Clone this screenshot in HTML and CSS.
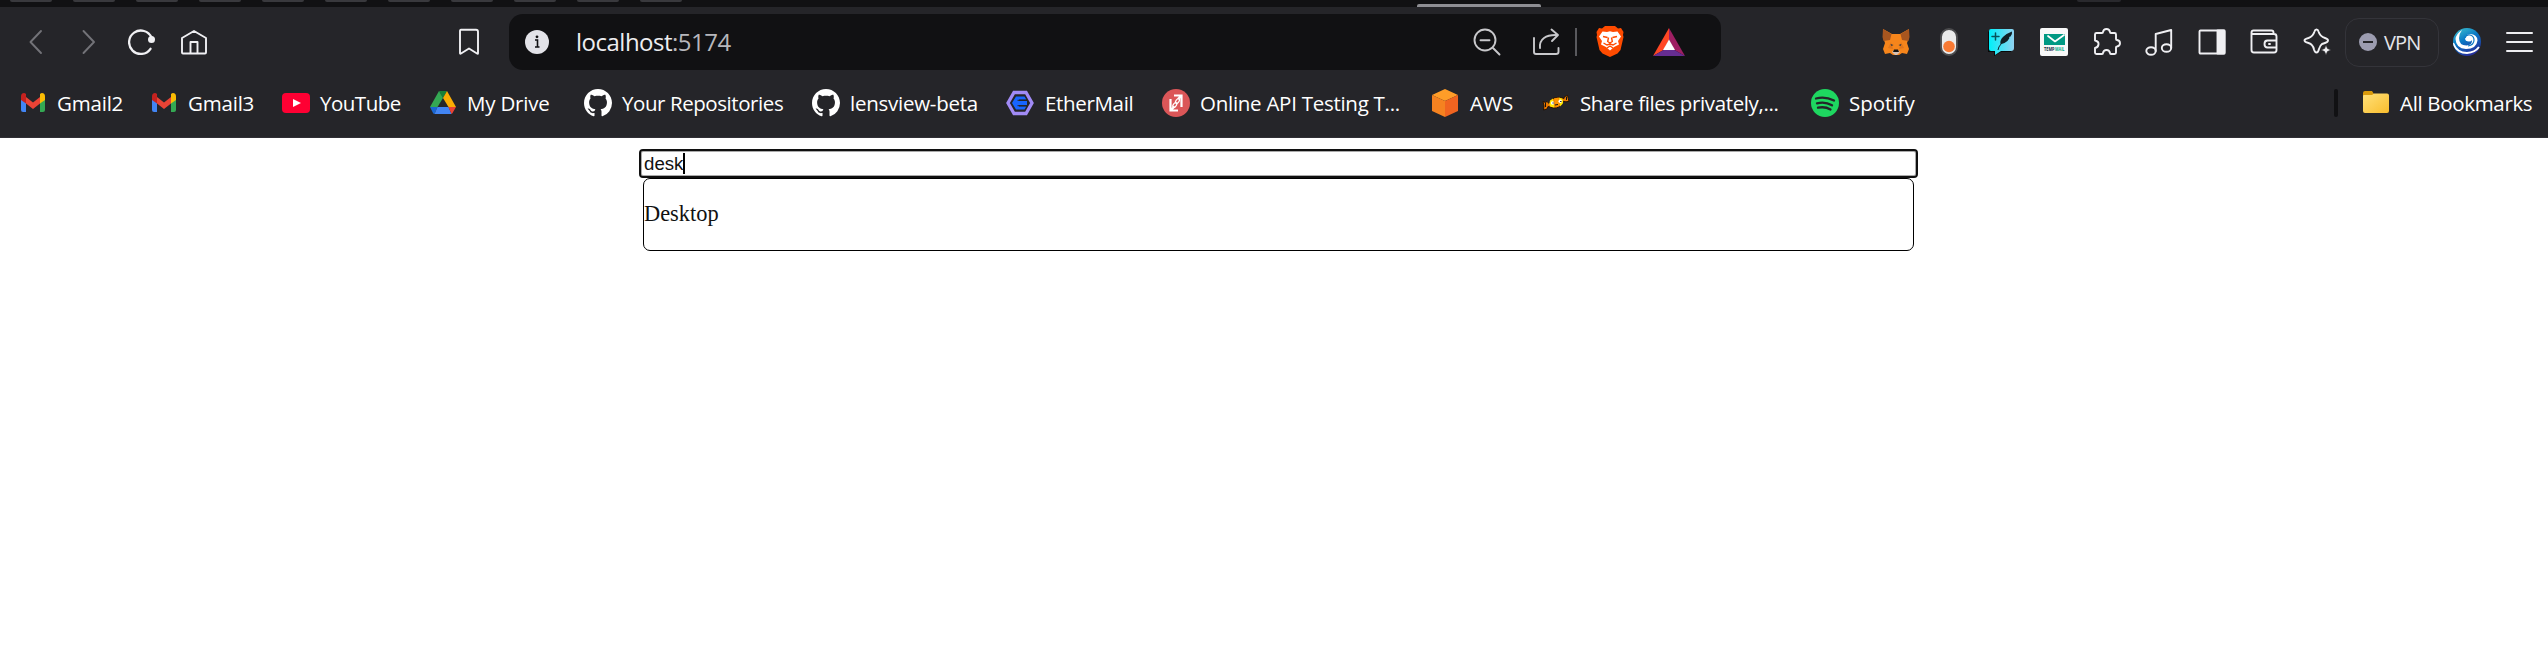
FILE: index.html
```
<!DOCTYPE html>
<html lang="en">
<head>
<meta charset="utf-8">
<title>localhost:5174</title>
<link rel="stylesheet" href="styles.css">
</head>
<body>
<svg class="defs" width="0" height="0">
  <symbol id="gmail" viewBox="0 0 28 28"><path d="M2 10h5v13H4q-2 0-2-2z" fill="#4285f4"/><path d="M21 10h5v11q0 2-2 2h-3z" fill="#34a853"/><path d="M7 8l7 5.500 7-5.500v6.500l-7 5.500-7-5.500z" fill="#ea4335"/><path d="M2 7.500Q2 4 5 4q1 0 2 1v9.500L2 11z" fill="#c5221f"/><path d="M26 7.500Q26 4 23 4q-1 0-2 1v9.500l5-3.500z" fill="#fbbc04"/></symbol>
  <symbol id="github" viewBox="0 0 16 16"><path fill="#fff" d="M8 0C3.58 0 0 3.58 0 8c0 3.54 2.290 6.530 5.470 7.590.4.070.55-.17.55-.38 0-.19-.01-.82-.01-1.490-2.010.37-2.530-.49-2.690-.94-.09-.23-.48-.94-.82-1.130-.28-.15-.68-.52-.01-.53.63-.01 1.080.58 1.230.82.72 1.210 1.870.87 2.330.66.070-.52.28-.87.51-1.070-1.780-.2-3.640-.89-3.640-3.950 0-.87.31-1.590.82-2.150-.08-.2-.36-1.020.08-2.120 0 0 .67-.21 2.200.82.64-.18 1.320-.27 2-.27s1.360.09 2 .27c1.530-1.040 2.200-.82 2.200-.82.44 1.100.16 1.920.08 2.120.51.56.82 1.270.82 2.150 0 3.070-1.870 3.750-3.650 3.950.29.25.54.73.54 1.480 0 1.070-.01 1.930-.01 2.200 0 .21.15.46.55.38A8 8 0 0 0 16 8c0-4.420-3.580-8-8-8z"/></symbol>
</svg>
<header class="browser">
  <div class="tabs">
    <div class="pinned"><i></i><i></i><i></i><i></i><i></i><i></i><i></i><i></i><i></i><i></i><i></i></div>
    <div class="active-tab"></div>
    <div class="new-tab"></div>
  </div>
  <div class="toolbar">
    <nav class="nav">
      <svg class="ic dim" viewBox="0 0 28 28"><path d="M19 3L8.500 14 19 25"/></svg>
      <svg class="ic dim" viewBox="0 0 28 28"><path d="M8.500 3L19 14 8.500 25"/></svg>
      <svg class="ic" viewBox="0 0 28 28"><path d="M23.500 9.500A11.700 11.700 0 1 0 22.500 20.800" stroke-width="2.300"/><circle cx="23.500" cy="11.500" r="3.500" fill="#f0f0f3" stroke="none"/></svg>
      <svg class="ic" viewBox="0 0 28 28"><path d="M2 10L14 3l12 7v14.500q0 1-1 1H3q-1 0-1-1zM10.500 25V14h7v11"/></svg>
    </nav>
    <svg class="ic mark" viewBox="0 0 28 28"><path d="M6 1.700h15q2 0 2 2v21.500q0 1-1 .3L14 20.500l-8 5q-1 .7-1-.5V3q0-1.300 1-1.300z"/></svg>
    <div class="address">
      <svg class="info" viewBox="0 0 24 24"><circle cx="12" cy="12" r="12" fill="#e3e3e8"/><path d="M10 10h2.500v7M10 17h4.500" stroke="#111113" stroke-width="1.600" fill="none"/><circle cx="12" cy="6.800" r="1.400" fill="#111113"/></svg>
      <div class="url">localhost<span>:5174</span></div>
      <svg class="ic soft zoom" viewBox="0 0 28 28"><circle cx="12" cy="12" r="10.500"/><path d="M7.500 12.300h9M20 20l6.500 6.500"/></svg>
      <svg class="ic soft share" viewBox="0 0 28 28"><path d="M2 10v14q0 2 2 2h20q2.500 0 2.500-2v-4M8 20C7 11 14 6.500 25 7M19.500 1.500L26 7l-6 6"/></svg>
      <div class="divider"></div>
      <svg class="brave" viewBox="0 0 28 32"><path d="M9 0h10l3 2.500 3-.5 2.500 4-.5 3 .5 2-3 13-3 3.500L14 31l-7.500-3.500L3.500 24l-3-13 .5-2-.5-3L3 2l3 .5z" fill="#ff4b00"/><path d="M6.500 5.500L11 6l3-.8L17 6l4.500-.5 3.500 5-3 4.500 1 3.500-5 2.500-4 3.500-4-3.500-5-2.500L6 15l-3-4.500z" fill="#fff"/><path d="M7 10.500l4.500 1M21 10.500l-4.500 1M12.500 11.500l-.8 4 2.300 1.500 2.300-1.500-.8-4M14 17v2M7.500 17l3.500 2 3-1 3 1 3.500-2M11 22l3-2 3 2" fill="none" stroke="#ff4b00" stroke-width="1.400"/></svg>
      <svg class="bat" viewBox="0 0 32 28"><path d="M16 0L0 28l10.500-6L16 12z" fill="#ff4724"/><path d="M16 0l16 28-10.500-6L16 12z" fill="#9e1f63"/><path d="M0 28h32l-10.500-6h-11z" fill="#662d91"/><path d="M16 11.500L10 22h12z" fill="#fff"/></svg>
    </div>
    <div class="extensions">
      <svg class="ic plain" viewBox="0 0 28 28"><path d="M1 1l9 5h8l9-5-.5 10-1.500 4 2 6-2 5-5-1-3 2h-6l-3-2-5 1-2-5 2-6-1.500-4z" fill="#f6851b"/><path d="M1 1l8.500 5L8 12l-6.500 1L.5 9zM27 1l-8.500 5 1.500 6 6.500 1 1-4z" fill="#a8561f"/><path d="M9 14l-3 6 5 1zM19 14l3 6-5 1z" fill="#e2761b"/><path d="M8.500 16l3 1-2 1zM19.500 16l-3 1 2 1z" fill="#233447"/><path d="M10 24l2-2h4l2 2-3 3h-2z" fill="#d7c1b3"/><path d="M12 21.500h4l1 2.500h-6z" fill="#161616"/></svg>
      <svg class="ic plain" viewBox="0 0 28 28"><rect x="6" y="1" width="16" height="26" rx="8" fill="#ebebeb" stroke="#4c4c4e"/><circle cx="14" cy="18.500" r="5.800" fill="#f97a33"/></svg>
      <svg class="ic plain" viewBox="0 0 28 28"><defs><linearGradient id="quill"><stop stop-color="#00f0fa"/><stop offset="1" stop-color="#91d2f0"/></linearGradient></defs><path d="M3 2h21v22H14l-7 4v-4H1V4z" fill="#080808"/><path d="M4 1h21q2 0 2 2v17q0 3-3 3H14l-6 4v-4H4q-2 0-2-2V3q0-2 2-2z" fill="url(#quill)"/><path d="M5 8.500h7M8.500 5v7" stroke="#07545b" stroke-width="1.500"/><path d="M10.500 22q1-4 3-6-1-4 3-7.500Q19.500 5.500 25 3.500q.5 3-1.500 5l-1.500.5.500 1q-2 4-5 5l-3 1q-2 2-3 6z" fill="#102027"/></svg>
      <svg class="ic plain" viewBox="0 0 28 28"><rect width="28" height="28" rx="2" fill="#f8f8f8"/><path d="M4 6h21v11H4z" fill="#009983"/><path d="M8 8l7 5.500L24 7" stroke="#fff" stroke-width="1.700" fill="none"/><text class="tiny" x="4" y="22.500" textLength="10.500" lengthAdjust="spacingAndGlyphs" fill="#132b42">TEMP</text><text class="tiny" x="15" y="22.500" textLength="9.500" lengthAdjust="spacingAndGlyphs" fill="#00a887">MAIL</text></svg>
      <svg class="ic" viewBox="0 0 28 28"><path d="M3.500 5H9q1 0 1-1 .5-3 3.500-3T17 4q0 1 1 1h3.500q1.500 0 1.500 1.500V11q0 1 1 1 3 .5 3 3.300T24 18.500q-1 0-1 1v5q0 1.500-1.500 1.500H18q-1 0-1-1-.5-3-3.500-3T10 25q0 1-1 1H3.500Q2 26 2 24.500V20q3-.5 3.500-3.500T2 12.500v-6Q2 5 3.500 5z"/></svg>
      <svg class="ic" viewBox="0 0 28 28"><ellipse cx="6" cy="23" rx="4.700" ry="3.800"/><ellipse cx="21.500" cy="20" rx="4.700" ry="3.800"/><path d="M10.700 23V6l15.500-4v18"/></svg>
      <svg class="ic" viewBox="0 0 28 28"><rect x="1.500" y="2.500" width="25" height="23" rx="1"/><path d="M19.500 2.500h7v23h-7z" fill="#f0f0f3"/></svg>
      <svg class="ic" viewBox="0 0 28 28"><path d="M23.500 6V4.500q0-2-2-2H3.500q-2 0-2 2V22q0 2.500 2.500 2.500h20q2.500 0 2.500-2.500V8.500Q26.500 6 24 6H3.500q-2 0-2-1.500M26.500 12.500h-9q-3 0-3 3.500t3 3.500h9M19 16h1"/></svg>
      <svg class="ic" viewBox="0 0 28 28"><path d="M13.500 1.500Q15 1.500 15.500 3.500q1.500 5 6.500 6.500 3 1 3 2.500t-3 2.500l-3 1q-2 1.500-3 5-.8 3.500-2.500 3.500T11 21.500q-1-5-5.500-6.500Q1.500 14 1.500 12.500T5.500 10Q10 8.500 11.500 3.500q.5-2 2-2z"/><path d="M23 17l1.500 3.500L28 22l-3.500 1.500L23 27l-1.500-3.500L18 22l3.500-1.500z" fill="#f0f0f3" stroke="#252529" stroke-width=".6"/></svg>
    </div>
    <div class="vpn"><svg width="18" height="18" viewBox="0 0 18 18"><circle cx="9" cy="9" r="9" fill="#9c9cb0"/><path d="M4 9h10" stroke="#252529" stroke-width="2"/></svg><span>VPN</span></div>
    <svg class="profile" viewBox="0 0 28 28"><defs><linearGradient id="wave" x2="0.500" y2="1"><stop stop-color="#43c8cf"/><stop offset=".5" stop-color="#0879c6"/><stop offset="1" stop-color="#25309b"/></linearGradient><clipPath id="disc"><circle cx="14" cy="14" r="14"/></clipPath></defs><g clip-path="url(#disc)"><path d="M0 0h28v28H0z" fill="url(#wave)"/><path d="M24.500 12.500Q24 6 17 6q-5 .5-5 4 0 3.500 4 3.500 2.500 0 3-1.500.5 5-5.500 5.500Q6 17.500 6 10q0-4 3-8-6 4-6.500 9Q3 20.500 13 21q10.500 0 11.500-8.500z" fill="#fff"/><path d="M12 10q1-4 5-3 4 1 4 5 0 5-6 6" fill="none" stroke="#0b79c4" stroke-width="1.200"/><path d="M0 15q4 10 14 10 8-.5 12-6" fill="none" stroke="#fff" stroke-width="2"/></g></svg>
    <div class="menu"><i></i><i></i><i></i></div>
  </div>
  <div class="bookmarks">
    <div class="list">
      <a class="g2"><svg class="fav"><use href="#gmail"/></svg><span>Gmail2</span></a>
      <a class="g3"><svg class="fav"><use href="#gmail"/></svg><span>Gmail3</span></a>
      <a class="yt"><svg class="fav" viewBox="0 0 28 28"><rect y="4" width="28" height="20" rx="4" fill="#ff0033"/><path d="M11 10l8 4-8 4z" fill="#fff"/></svg><span>YouTube</span></a>
      <a class="drive"><svg class="fav" viewBox="0 0 28 28"><path d="M10 2h8l-4 7z" fill="#188038"/><path d="M10 2l4 7-5.500 9H1z" fill="#34a853"/><path d="M18 2l9 16h-7.500L14 9z" fill="#fbad04"/><path d="M1 18h7.500l-3 7q-1 0-1.500-1z" fill="#1967d2"/><path d="M8.500 18h11l3 7h-17z" fill="#4285f4"/><path d="M19.500 18H27l-3.500 6q-.5 1-1 1z" fill="#ea4335"/></svg><span>My Drive</span></a>
      <a class="repos"><svg class="fav"><use href="#github"/></svg><span>Your Repositories</span></a>
      <a class="lens"><svg class="fav"><use href="#github"/></svg><span>lensview-beta</span></a>
      <a class="ether"><svg class="fav" viewBox="0 0 28 28"><path d="M8 3.500h12L26 14l-6 10.500H8L2 14z" fill="#252529" stroke="#a18bf5" stroke-width="3.300"/><path d="M10 7.500h8.500l1.800 3H13V12h8v4h-8v1.500h7.300l-1.800 3H10L6 14z" fill="#1765ff"/><path d="M11.500 11.300H21M11.500 16.700H21" stroke="#252529" stroke-width="1"/></svg><span>EtherMail</span></a>
      <a class="api"><svg class="fav" viewBox="0 0 28 28"><circle cx="14" cy="14" r="14" fill="#db5658"/><path d="M8.500 10v11.500H16M12 6.500h7.500V18M9 21l3.500-3.500M16 10l3.500-3.500" fill="none" stroke="#fff" stroke-width="2.200"/><ellipse cx="12.800" cy="16" rx="1.500" ry="2.700" transform="rotate(35 12.800 16)" fill="none" stroke="#fff" stroke-width="1.200"/><ellipse cx="15.500" cy="12" rx="1.500" ry="2.700" transform="rotate(35 15.500 12)" fill="none" stroke="#fff" stroke-width="1.200"/></svg><span>Online API Testing T...</span></a>
      <a class="aws"><svg class="fav" viewBox="0 0 28 28"><path d="M14 0l13 6-13 6L1 6z" fill="#ff9d28"/><path d="M1 6l13 6v16L1 22z" fill="#f58220"/><path d="M27 6l-13 6v16l13-6z" fill="#f06420"/></svg><span>AWS</span></a>
      <a class="files"><svg class="fav" viewBox="0 0 28 28"><path d="M1 12.500l2.500 1 1.500-1 2 2q1-4 5-5.500 5-1.500 8.500 0l1.500.5.500-2 2-.5 1-.7.700 3 .8 3-3 .5-3-.5q-1 5-6 6.500-4 .8-7-.8L6 17.500 5 20l-3.500 1 .5-4z" fill="#e97800" stroke="#1c0d00" stroke-width=".9"/><path d="M8 11.500l3-2 1.500 9-4-.8q-2-3-.5-6.200zM17 8.500l3 1q2 3 .5 5.500L18 17.500z" fill="#ffe500"/><path d="M12 9.500l4.500-1 1.200 8.500-4 1.500z" fill="#ff9400"/><circle cx="10.500" cy="14" r="1.700" fill="#fff"/><circle cx="18.200" cy="12.300" r="1.700" fill="#fff"/><path d="M10.500 14h1.300M18.200 12.500h1.300M13 16l3-.5M3.500 14v4M24.500 8v3" stroke="#111"/></svg><span>Share files privately,...</span></a>
      <a class="spot"><svg class="fav" viewBox="0 0 28 28"><circle cx="14" cy="14" r="14" fill="#1ed760"/><path d="M5 9.500q9-2.500 18 2M6 14.300q8-2.200 15 2M7 18.700q7-1.500 12.500 1.800" fill="none" stroke="#252529" stroke-width="2.300" stroke-linecap="round"/></svg><span>Spotify</span></a>
    </div>
    <div class="separator"></div>
    <a class="all"><svg class="fav" viewBox="0 0 28 28"><defs><linearGradient id="folder" x2="1" y2="1"><stop stop-color="#ffe17a"/><stop offset="1" stop-color="#f9bd2d"/></linearGradient></defs><path d="M1 4q0-2 2-2h7l2 3v5H1z" fill="#d99a0b"/><path d="M1 7q0-1 1-1h8l2-1.500h13q2 0 2 2V22q0 2-2 2H3q-2 0-2-2z" fill="url(#folder)"/></svg><span>All Bookmarks</span></a>
  </div>
</header>
<main class="page">
  <div class="search">desk<i></i></div>
  <div class="results"><p>Desktop</p></div>
</main>
</body>
</html>
```
FILE: styles.css
```
* { box-sizing: border-box; }
body { margin: 0; background: #fff; height: 646px; overflow: hidden; }
.defs { display: block; height: 0; }
.browser { height: 138px; background: #252529; border-bottom: 1px solid #302f35; font-family: "Open Sans", "Noto Sans", sans-serif; color: #fff; }
.tabs { display: flex; height: 7px; background: #111113; padding-left: 10px; }
.pinned { display: flex; gap: 21px; width: 1407px; }
.pinned i { width: 42px; height: 2px; background: #39393d; border-radius: 0 0 8px 8px; }
.active-tab { width: 124px; height: 3px; margin-top: 4px; background: #8e8e93; border-radius: 2px 2px 0 0; }
.new-tab { width: 44px; height: 2px; margin-left: 536px; background: #29292d; border-radius: 0 0 10px 10px; }
.toolbar { display: flex; align-items: center; height: 70px; padding-left: 10px; }
.ic { width: 28px; height: 28px; flex: none; fill: none; stroke: #f0f0f3; stroke-width: 1.900; stroke-linecap: round; stroke-linejoin: round; }
.dim { stroke: #737378; }
.soft { stroke: #c8c8cb; }
.plain { stroke: none; }
.tiny { font-size: 4.500px; font-weight: 700; }
.nav { display: grid; grid-template-columns: repeat(4, 52.700px); justify-items: center; width: 445px; }
.mark { margin-right: 26px; }
.address { display: flex; align-items: center; width: 1212px; height: 56px; padding-left: 16px; background: #111113; border-radius: 14px; }
.info { width: 24px; height: 24px; margin-right: 27px; }
.url { width: 897px; font-size: 24px; line-height: 34px; letter-spacing: -0.500px; color: #ededf0; }
.url span { color: #b7b7bc; }
.share { margin-left: 31px; }
.divider { width: 2px; height: 28px; margin-left: 15px; background: #59595d; }
.brave { width: 28px; height: 32px; margin-left: 19px; }
.bat { width: 32px; height: 28px; margin-left: 29px; }
.extensions { display: grid; grid-template-columns: repeat(9, 52.600px); width: 474px; margin-left: 149px; justify-items: center; }
.vpn { display: flex; align-items: center; width: 94px; height: 49px; margin-left: 1px; padding-left: 13px; border: 1px solid #34343a; border-radius: 14px; }
.vpn span { margin-left: 7px; font-size: 20px; letter-spacing: -0.900px; color: #e5e5ea; }
.profile { width: 28px; height: 28px; margin-left: 14px; }
.menu { display: grid; gap: 7px; width: 27px; margin-left: 25px; }
.menu i { height: 2px; background: #eeeef1; border-radius: 1px; }
.bookmarks { display: flex; align-items: center; height: 52px; padding-left: 19px; font-size: 20.500px; }
.list { display: grid; grid-template-columns: 131px 132px 147px 155px 228px 194px 156px 269px 111px 269px 120px; width: 2315px; }
.bookmarks a { display: flex; align-items: center; gap: 10px; white-space: nowrap; }
.fav { width: 28px; height: 28px; flex: none; }
.bookmarks span { line-height: 28px; }
.g2, .g3 { letter-spacing: -0.200px; }
.yt { letter-spacing: -0.500px; }
.drive { letter-spacing: -0.200px; }
.repos { letter-spacing: -0.430px; }
.lens { letter-spacing: -0.250px; }
.ether, .all { letter-spacing: -0.330px; }
.api { letter-spacing: -0.270px; }
.files { letter-spacing: -0.370px; }
.bookmarks .ether, .bookmarks .aws { gap: 11px; }
.separator { width: 4px; height: 28px; background: #111113; border-radius: 2px; }
.all { margin-left: 24px; }
.page { width: 1273px; margin: 13px 0 0 642px; }
.search { display: flex; align-items: center; height: 25px; margin-left: -1px; width: 1275px; padding-left: 2px; border: 1px solid #aaa; outline: 2px solid #101010; border-radius: 2px; font: 18.670px/22px "Liberation Sans", Arial, sans-serif; color: #111; }
.search i { width: 2px; height: 21px; background: #000; }
.results { height: 73px; margin: 2px 0 0 1px; width: 1271px; border: 1px solid #000; border-radius: 7px; font: 22.400px/26px "Liberation Serif", "Times New Roman", serif; color: #111; }
.results p { margin: 22px 0; }
```
